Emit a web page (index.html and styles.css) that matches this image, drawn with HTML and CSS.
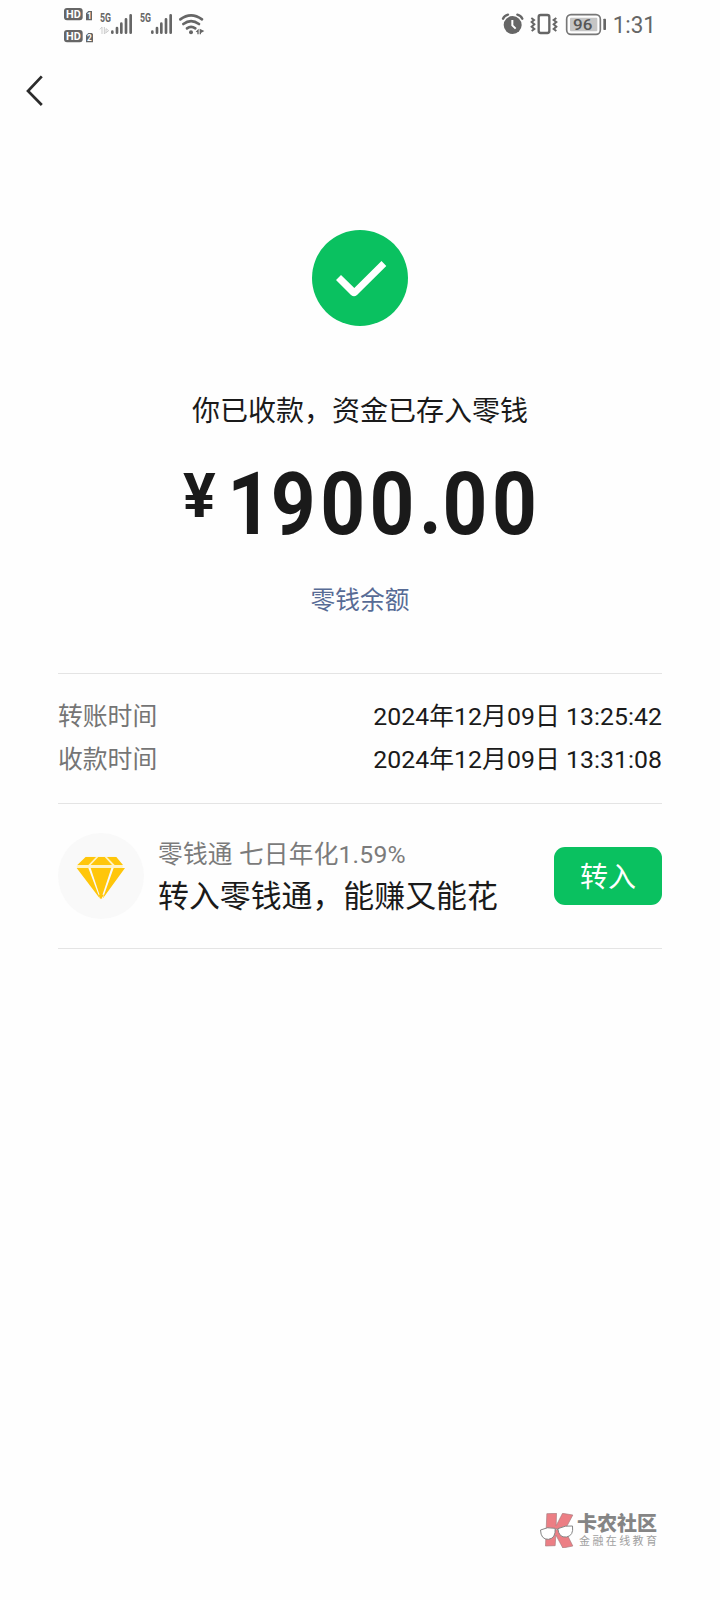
FILE: index.html
```html
<!DOCTYPE html>
<html lang="zh-CN">
<head>
<meta charset="utf-8">
<title>收款</title>
<link rel="stylesheet" href="styles.css">
</head>
<body>
<header class="status">
  <svg class="status-left" viewBox="0 0 510 150">
    <g fill="#666">
      <rect x="42" y="24" width="56" height="37" rx="9"/>
      <rect x="42" y="90" width="56" height="37" rx="9"/>
      <path d="M108 40l7-7h11v28h-18zM108 106l7-7h11l3 4v24h-21z"/>
    </g>
    <g class="badge">
      <text x="48" y="54" textLength="44" lengthAdjust="spacingAndGlyphs">HD</text>
      <text x="48" y="120" textLength="44" lengthAdjust="spacingAndGlyphs">HD</text>
      <text x="111" y="57" class="sim">1</text>
      <text x="111" y="123" class="sim">2</text>
    </g>
    <g class="net">
      <text x="150" y="67" textLength="33" lengthAdjust="spacingAndGlyphs">5G</text>
      <text x="270" y="67" textLength="33" lengthAdjust="spacingAndGlyphs">5G</text>
    </g>
    <path d="M150 88l6-7v21M163 81v21l5-5M168 86l8 6-8 6z" stroke="#ccc" stroke-width="3" fill="none"/>
    <g stroke="#666" stroke-width="8" stroke-linecap="round">
      <path d="M187 95v3M201 84v14M214 71v27M228 58v40M242 46v52"/>
      <path d="M307 95v3M321 84v14M334 71v27M348 58v40M362 46v52"/>
    </g>
    <g fill="none" stroke="#666" stroke-width="8" stroke-linecap="round">
      <path d="M391 58q32-24 65 0M400 72q23-17 47 0M411 85q12-9 25 0"/>
    </g>
    <circle cx="423" cy="97" r="6" fill="#666"/>
    <path d="M437 95l9-9v17h-4v-6zM449 86v17h4v-4l10-6z" fill="#666"/>
  </svg>
  <svg class="status-right" viewBox="0 0 540 150">
    <circle cx="68" cy="75" r="27" fill="#666"/>
    <path d="M39 56q4-9 15-12M82 44q11 3 15 12" fill="none" stroke="#666" stroke-width="7" stroke-linecap="round"/>
    <path d="M67 60v16l10 10" fill="none" stroke="#fff" stroke-width="6"/>
    <rect x="146" y="45" width="32" height="54" rx="6" fill="none" stroke="#666" stroke-width="7"/>
    <path d="M124 54l8 6-7 6 8 7-8 7 8 7-8 6M199 54l-8 6 8 6-8 7 8 7-8 7 8 6" fill="none" stroke="#666" stroke-width="6"/>
    <rect x="230" y="44" width="101" height="59" rx="13" fill="none" stroke="#777" stroke-width="5"/>
    <rect x="240" y="53" width="82" height="41" rx="3" fill="#c5c5c5"/>
    <rect x="340" y="56" width="8" height="34" rx="2" fill="#666"/>
    <text x="249" y="90" textLength="58" lengthAdjust="spacingAndGlyphs" class="charge">96</text>
    <text x="368" y="99" textLength="130" lengthAdjust="spacingAndGlyphs" class="clock">1:31</text>
  </svg>
</header>
<nav class="nav">
  <svg class="back" viewBox="0 0 48 90"><path d="M41.8 16.3L28 31L41.8 45" fill="none" stroke="#2b2b2b" stroke-width="2.7"/></svg>
</nav>
<main class="main">
  <svg class="check" viewBox="0 0 96 96">
    <circle cx="48" cy="48" r="48" fill="#0ac160"/>
    <path d="M24 50L29 45L42.3 58L69.5 31L74.3 36L45 65Q42 67.5 39 65Z" fill="#fff"/>
  </svg>
  <h1 class="title">你已收款，资金已存入零钱</h1>
  <div class="amount"><span class="yen">¥</span><span class="digits"><span class="one">1</span>900<span class="dot">.</span>00</span></div>
  <a class="link">零钱余额</a>
  <dl class="times">
    <div class="row"><dt>转账时间</dt><dd>2024年12月09日 13:25:42</dd></div>
    <div class="row"><dt>收款时间</dt><dd>2024年12月09日 13:31:08</dd></div>
  </dl>
  <section class="promo">
    <div class="gem">
      <svg viewBox="0 0 258 258">
        <path d="M57 105l-1-6 27-28h89l23 28-2 6z" fill="#fff3c4"/>
        <g fill="#ffc60a">
          <path d="M83 72h31L91 96H58zM121 72h19l22 24H98zM147 72h28l20 24h-25z"/>
          <path d="M56 105h35l35 92zM98 105h62l-31 94zM167 105h34l-67 92z"/>
          <path d="M120 185h18l-9 14z"/>
        </g>
      </svg>
    </div>
    <div class="promo-text">
      <div class="promo-sub">零钱通 七日年化1.59%</div>
      <div class="promo-title">转入零钱通，能赚又能花</div>
    </div>
    <button class="button">转入</button>
  </section>
</main>
<footer class="brand">
  <svg viewBox="0 0 104 105">
    <path d="M20 2l29-1-1 37L67 1l31 5-24 45 24 48-30 6-21-39-2 32-29 1z" fill="#ec7e84" stroke="#a67d80" stroke-width="2"/>
    <path d="M1 51q20-11 44-5 2 30-20 33Q2 80 1 51zM53 47q24-11 44-8 4 29-18 33-23 3-26-25zM45 51q4-5 8-1" fill="#fff" stroke="#858585" stroke-width="3"/>
  </svg>
  <div class="brand-text">
    <div class="brand-name">卡农社区</div>
    <div class="brand-tag">金融在线教育</div>
  </div>
</footer>
</body>
</html>
```

FILE: styles.css
```css
* { box-sizing: border-box; }
body {
  margin: 0;
  height: 1600px;
  display: flex;
  flex-direction: column;
  background: #fefefe;
  color: #1a1a1a;
  font-family: Roboto, "Noto Sans CJK SC", sans-serif;
}
svg { display: block; }
.status {
  height: 50px;
  display: flex;
  justify-content: space-between;
  padding: 0 50px;
}
.status-left { width: 170px; height: 50px; }
.status-right { width: 180px; height: 50px; }
.badge { font-size: 32px; font-weight: 700; fill: #fff; }
.sim { font-size: 25px; }
.net { font-size: 38px; font-weight: 700; fill: #666; }
.charge { font-size: 46px; font-weight: 500; fill: #555; }
.clock { font-size: 69px; fill: #666; }
.nav { height: 180px; padding-top: 10px; }
.back { width: 48px; height: 90px; }
.main {
  display: flex;
  flex-direction: column;
  align-items: center;
  padding: 0 58px;
}
.check { width: 96px; height: 96px; }
.title {
  margin: 66px 0 0;
  font-size: 28px;
  line-height: 40px;
  font-weight: 400;
}
.amount {
  height: 104px;
  margin-top: 20px;
  display: flex;
  align-items: flex-start;
  font-weight: 500;
  width: 354px;
}
.yen { font-size: 61px; line-height: 88px; font-weight: 700; width: 38px; flex: none; }
.digits {
  font-size: 88px;
  line-height: 104px;
  font-weight: 700;
  letter-spacing: 5px;
  transform: scaleX(0.89);
  transform-origin: 0 0;
}
.one { margin-left: 7px; letter-spacing: -1.5px; }
.dot { letter-spacing: 1px; }
.link {
  margin-top: 25px;
  font-size: 24.7px;
  line-height: 40px;
  color: #576b95;
}
.times {
  width: 100%;
  height: 130px;
  margin: 52px 0 0;
  padding-top: 21px;
  border-top: 1px solid #e4e4e4;
  font-size: 24.8px;
  line-height: 43px;
}
.row { display: flex; justify-content: space-between; }
.row dt { color: #757575; }
.row dd { margin: 0; letter-spacing: 0.05px; }
.promo {
  width: 100%;
  height: 146px;
  display: flex;
  align-items: center;
  border-top: 1px solid #e4e4e4;
  border-bottom: 1px solid #e4e4e4;
}
.gem { width: 86px; height: 86px; border-radius: 50%; background: #f9f9f9; }
.promo-text { flex: 1; margin-left: 14px; padding-top: 2px; white-space: nowrap; }
.promo-sub { font-size: 24.7px; line-height: 40px; letter-spacing: 0.2px; color: #7b7b7b; }
.promo-title { font-size: 30.9px; line-height: 44px; }
.button {
  width: 108px;
  height: 58px;
  padding: 4px 0 0;
  border: 0;
  border-radius: 11px;
  background: #0ac160;
  color: #fff;
  font: 400 28px/54px Roboto, "Noto Sans CJK SC", sans-serif;
}
.brand {
  display: flex;
  margin: auto 62px 51px auto;
  height: 36px;
}
.brand svg { width: 35px; height: 35px; }
.brand-text { margin-left: 2px; white-space: nowrap; width: 81px; }
.brand-name { font-size: 20px; line-height: 23px; font-weight: 900; color: #858585; }
.brand-tag { margin-left: 2px; font-size: 11px; line-height: 12px; letter-spacing: 2.4px; color: #a0a0a0; }
```
